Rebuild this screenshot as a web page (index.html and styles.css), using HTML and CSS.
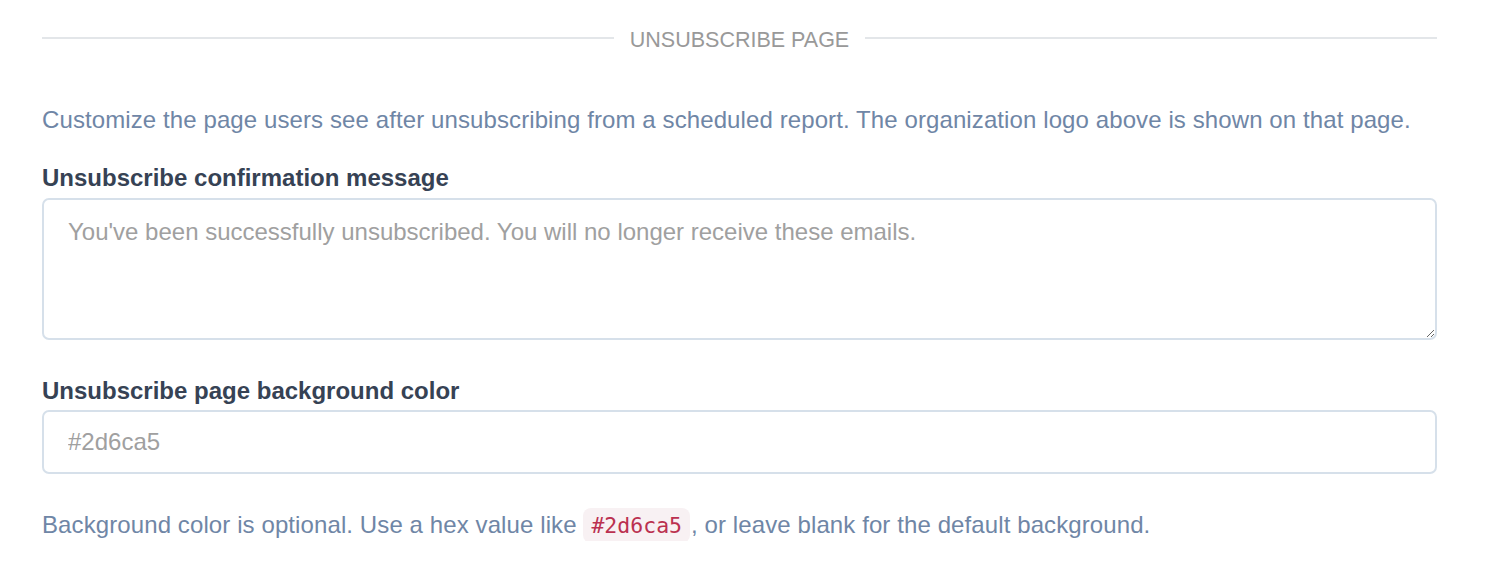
FILE: index.html
```html
<!DOCTYPE html>
<html>
<head>
<meta charset="utf-8">
<link rel="stylesheet" href="styles.css">
</head>
<body>
<div class="page">
  <div class="divider">
    <span class="divider-line"></span>
    <span class="divider-title">UNSUBSCRIBE PAGE</span>
    <span class="divider-line"></span>
  </div>
  <p class="desc">Customize the page users see after unsubscribing from a scheduled report. The organization logo above is shown on that page.</p>
  <label class="label">Unsubscribe confirmation message</label>
  <textarea class="textarea" placeholder="You've been successfully unsubscribed. You will no longer receive these emails."></textarea>
  <label class="label label-2">Unsubscribe page background color</label>
  <input class="input" type="text" placeholder="#2d6ca5">
  <p class="help">Background color is optional. Use a hex value like <code class="code">#2d6ca5</code>, or leave blank for the default background.</p>
</div>
</body>
</html>
```
FILE: styles.css
```css
html, body {
  margin: 0;
  padding: 0;
  background: #fff;
}
body {
  font-family: "Liberation Sans", Arial, sans-serif;
  font-size: 24px;
}
.page {
  width: 1395px;
  margin-left: 42px;
  display: flex;
  flex-direction: column;
}
.divider {
  display: flex;
  align-items: center;
  gap: 16px;
  height: 30px;
  margin-top: 23px;
}
.divider-line {
  flex: 1;
  height: 2px;
  background: #e3e6e9;
}
.divider-title {
  color: #999999;
  font-size: 21.5px;
  line-height: 30px;
  position: relative;
  top: 2px;
}
.desc {
  margin: 52px 0 0;
  color: #6f86a6;
  line-height: 30px;
  letter-spacing: 0.1px;
}
.label {
  margin-top: 28px;
  font-weight: bold;
  color: #364254;
  line-height: 30px;
}
.textarea {
  margin-top: 5px;
  box-sizing: border-box;
  width: 100%;
  height: 142px;
  border: 2px solid #d6e0ea;
  border-radius: 7px;
  padding: 17px 24px;
  font-family: "Liberation Sans", Arial, sans-serif;
  font-size: 24px;
  line-height: 29px;
  resize: vertical;
}
.textarea::placeholder, .input::placeholder {
  color: #a0a0a0;
}
.label-2 {
  margin-top: 36px;
}
.input {
  margin-top: 4px;
  box-sizing: border-box;
  width: 100%;
  height: 64px;
  border: 2px solid #d6e0ea;
  border-radius: 7px;
  padding: 0 24px;
  font-family: "Liberation Sans", Arial, sans-serif;
  font-size: 24px;
}
.help {
  margin: 36px 0 0;
  color: #6f86a6;
  line-height: 30px;
  letter-spacing: 0.1px;
}
.code {
  font-family: "DejaVu Sans Mono", "Liberation Mono", monospace;
  font-size: 21.5px;
  letter-spacing: 0;
  color: #bb3150;
  background: #f8f1f3;
  border-radius: 8px;
  padding: 5px 8px;
  margin: 0 1px 0 0;
}
```
